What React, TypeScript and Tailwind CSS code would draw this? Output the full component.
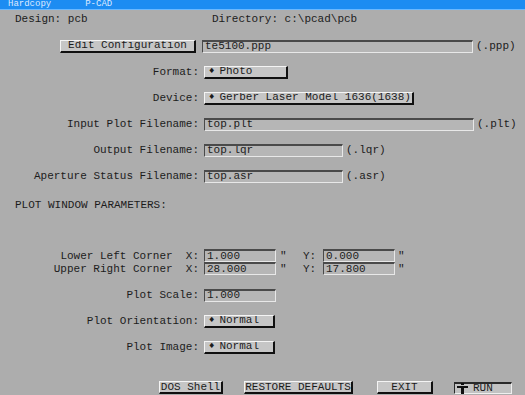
import React from "react";

const mono = { fontFamily: '"Liberation Mono", "Courier New", monospace' };

function Field({ w, value }: { w: string; value: string }) {
  return (
    <div
      className={`${w} h-[13px] shrink-0 bg-[#b6b6b6] border-t-2 border-l border-t-[#4a4a4a] border-l-[#4a4a4a] border-b border-r border-b-[#e8e8e8] border-r-[#e8e8e8] pl-[2px] flex items-center leading-[11px] overflow-hidden whitespace-pre`}
    >
      {value}
    </div>
  );
}

function Btn({ w, children, center = false }: { w: string; children: React.ReactNode; center?: boolean }) {
  return (
    <div
      className={`${w} h-[13px] shrink-0 bg-[#c6c6c6] border-t border-l border-t-[#f4f4f4] border-l-[#f4f4f4] border-b-2 border-r-2 border-b-[#101010] border-r-[#101010] flex items-center ${center ? "justify-center" : "pl-[3px]"} leading-[11px] whitespace-pre overflow-hidden`}
    >
      {children}
    </div>
  );
}

function Choice({ w, text }: { w: string; text: string }) {
  return (
    <Btn w={w}>
      <span className="text-[9px] leading-[9px] mr-[5px] ml-[1px]">♦</span>
      <span>{text}</span>
    </Btn>
  );
}

function Label({ children }: { children: React.ReactNode }) {
  return <div className="w-[199px] shrink-0 text-right whitespace-pre mr-[5px]">{children}</div>;
}

export default function App() {
  return (
    <div
      className="w-[525px] h-[395px] bg-[#adadad] text-[#1c1c1c] text-[11px] leading-[12px] overflow-hidden flex flex-col"
      style={mono}
    >
      {/* title bar */}
      <div className="h-[10px] bg-[#1c8cf2] border-b border-b-[#6ab8ff] flex items-center text-[#dce9ff] text-[9px] leading-[9px] shrink-0">
        <div className="pl-[8px] whitespace-pre">Hardcopy</div>
        <div className="pl-[34px] whitespace-pre">P-CAD</div>
      </div>

      {/* design / directory */}
      <div className="h-[18px] flex items-center shrink-0">
        <div className="pl-[15px] w-[212px] whitespace-pre">Design: pcb</div>
        <div className="whitespace-pre">Directory: c:\pcad\pcb</div>
      </div>

      <div className="h-[5px] shrink-0" />

      {/* edit configuration */}
      <div className="h-[26px] flex items-center shrink-0">
        <div className="pl-[60px]" />
        <Btn w="w-[136px]" center>
          Edit Configuration
        </Btn>
        <div className="ml-[6px]" />
        <Field w="w-[271px]" value="te5100.ppp" />
        <div className="ml-[3px] whitespace-pre">(.ppp)</div>
      </div>

      <div className="h-[26px] flex items-center shrink-0">
        <Label>Format:</Label>
        <Choice w="w-[84px]" text="Photo" />
      </div>

      <div className="h-[26px] flex items-center shrink-0">
        <Label>Device:</Label>
        <Choice w="w-[210px]" text="Gerber Laser Model 1636(1638)" />
      </div>

      <div className="h-[26px] flex items-center shrink-0">
        <Label>Input Plot Filename:</Label>
        <Field w="w-[270px]" value="top.plt" />
        <div className="ml-[3px] whitespace-pre">(.plt)</div>
      </div>

      <div className="h-[26px] flex items-center shrink-0">
        <Label>Output Filename:</Label>
        <Field w="w-[139px]" value="top.lqr" />
        <div className="ml-[3px] whitespace-pre">(.lqr)</div>
      </div>

      <div className="h-[26px] flex items-center shrink-0">
        <Label>Aperture Status Filename:</Label>
        <Field w="w-[139px]" value="top.asr" />
        <div className="ml-[3px] whitespace-pre">(.asr)</div>
      </div>

      <div className="h-[32px] flex items-center shrink-0">
        <div className="pl-[15px] whitespace-pre">PLOT WINDOW PARAMETERS:</div>
      </div>

      <div className="h-[28px] shrink-0" />

      <div className="h-[13px] flex items-center shrink-0">
        <Label>{"Lower Left Corner  X:"}</Label>
        <Field w="w-[72px]" value="1.000" />
        <div className="ml-[4px] w-[23px]">"</div>
        <div className="w-[20px] whitespace-pre">Y:</div>
        <Field w="w-[72px]" value="0.000" />
        <div className="ml-[3px]">"</div>
      </div>

      <div className="h-[13px] flex items-center shrink-0">
        <Label>{"Upper Right Corner  X:"}</Label>
        <Field w="w-[72px]" value="28.000" />
        <div className="ml-[4px] w-[23px]">"</div>
        <div className="w-[20px] whitespace-pre">Y:</div>
        <Field w="w-[72px]" value="17.800" />
        <div className="ml-[3px]">"</div>
      </div>

      <div className="h-[7px] shrink-0" />

      <div className="h-[26px] flex items-center shrink-0">
        <Label>Plot Scale:</Label>
        <Field w="w-[72px]" value="1.000" />
      </div>

      <div className="h-[26px] flex items-center shrink-0">
        <Label>Plot Orientation:</Label>
        <Choice w="w-[71px]" text="Normal" />
      </div>

      <div className="h-[26px] flex items-center shrink-0">
        <Label>Plot Image:</Label>
        <Choice w="w-[71px]" text="Normal" />
      </div>

      <div className="h-[22px] shrink-0" />

      {/* bottom buttons */}
      <div className="h-[12px] flex items-end shrink-0 pl-[159px]">
        <Btn w="w-[64px]" center>
          DOS Shell
        </Btn>
        <div className="w-[21px] shrink-0" />
        <Btn w="w-[109px]" center>
          RESTORE DEFAULTS
        </Btn>
        <div className="w-[24px] shrink-0" />
        <Btn w="w-[56px]" center>
          EXIT
        </Btn>
        <div className="w-[21px] shrink-0" />
        <div className="w-[58px] h-[12px] shrink-0 bg-[#c2c2c2] border-t-2 border-t-[#2a2a2a] border-l border-l-[#2a2a2a] border-r border-r-[#efefef] border-b border-b-[#efefef] flex items-center leading-[11px]">
          <svg width="12" height="11" viewBox="0 0 12 11" className="ml-[2px] mr-[4px] shrink-0">
            <rect x="4" y="0" width="3" height="2" fill="#101010" />
            <rect x="0" y="3" width="11" height="2" fill="#101010" />
            <rect x="4" y="3" width="3" height="8" fill="#101010" />
          </svg>
          <span>RUN</span>
        </div>
      </div>
    </div>
  );
}
